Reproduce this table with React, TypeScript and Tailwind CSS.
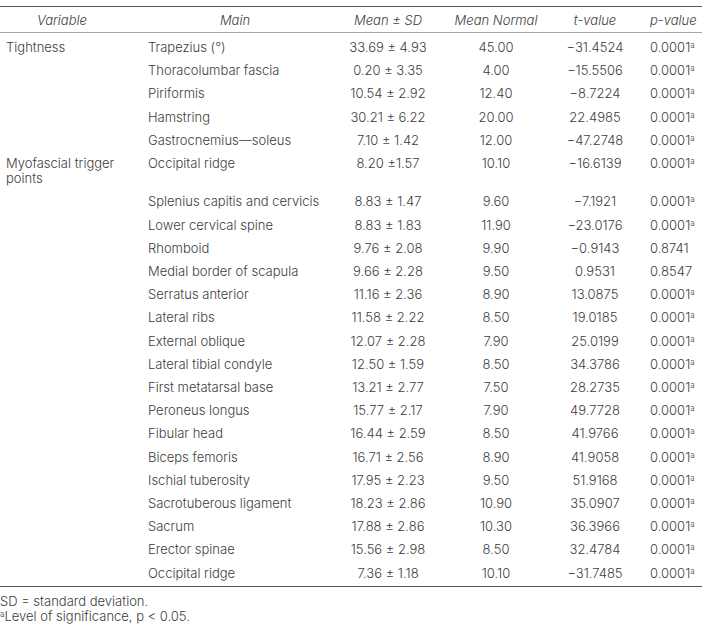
import React from "react";

type Row = { v?: string; m: string; sd: string; n: string; t: string; p: string; sup?: boolean };

const rows: Row[] = [
  { v: "Tightness", m: "Trapezius (°)", sd: "33.69 ± 4.93", n: "45.00", t: "−31.4524", p: "0.0001", sup: true },
  { m: "Thoracolumbar fascia", sd: "0.20 ± 3.35", n: "4.00", t: "−15.5506", p: "0.0001", sup: true },
  { m: "Piriformis", sd: "10.54 ± 2.92", n: "12.40", t: "−8.7224", p: "0.0001", sup: true },
  { m: "Hamstring", sd: "30.21 ± 6.22", n: "20.00", t: "22.4985", p: "0.0001", sup: true },
  { m: "Gastrocnemius—soleus", sd: "7.10 ± 1.42", n: "12.00", t: "−47.2748", p: "0.0001", sup: true },
  { v: "Myofascial trigger points", m: "Occipital ridge", sd: "8.20 ±1.57", n: "10.10", t: "−16.6139", p: "0.0001", sup: true },
  { m: "Splenius capitis and cervicis", sd: "8.83 ± 1.47", n: "9.60", t: "−7.1921", p: "0.0001", sup: true },
  { m: "Lower cervical spine", sd: "8.83 ± 1.83", n: "11.90", t: "−23.0176", p: "0.0001", sup: true },
  { m: "Rhomboid", sd: "9.76 ± 2.08", n: "9.90", t: "−0.9143", p: "0.8741" },
  { m: "Medial border of scapula", sd: "9.66 ± 2.28", n: "9.50", t: "0.9531", p: "0.8547" },
  { m: "Serratus anterior", sd: "11.16 ± 2.36", n: "8.90", t: "13.0875", p: "0.0001", sup: true },
  { m: "Lateral ribs", sd: "11.58 ± 2.22", n: "8.50", t: "19.0185", p: "0.0001", sup: true },
  { m: "External oblique", sd: "12.07 ± 2.28", n: "7.90", t: "25.0199", p: "0.0001", sup: true },
  { m: "Lateral tibial condyle", sd: "12.50 ± 1.59", n: "8.50", t: "34.3786", p: "0.0001", sup: true },
  { m: "First metatarsal base", sd: "13.21 ± 2.77", n: "7.50", t: "28.2735", p: "0.0001", sup: true },
  { m: "Peroneus longus", sd: "15.77 ± 2.17", n: "7.90", t: "49.7728", p: "0.0001", sup: true },
  { m: "Fibular head", sd: "16.44 ± 2.59", n: "8.50", t: "41.9766", p: "0.0001", sup: true },
  { m: "Biceps femoris", sd: "16.71 ± 2.56", n: "8.90", t: "41.9058", p: "0.0001", sup: true },
  { m: "Ischial tuberosity", sd: "17.95 ± 2.23", n: "9.50", t: "51.9168", p: "0.0001", sup: true },
  { m: "Sacrotuberous ligament", sd: "18.23 ± 2.86", n: "10.90", t: "35.0907", p: "0.0001", sup: true },
  { m: "Sacrum", sd: "17.88 ± 2.86", n: "10.30", t: "36.3966", p: "0.0001", sup: true },
  { m: "Erector spinae", sd: "15.56 ± 2.98", n: "8.50", t: "32.4784", p: "0.0001", sup: true },
  { m: "Occipital ridge", sd: "7.36 ± 1.18", n: "10.10", t: "−31.7485", p: "0.0001", sup: true },
];

const grid = "grid grid-cols-[124px_222px_84px_132px_66px_74px]";

export default function App() {
  return (
    <div
      className="w-[708px] h-[624px] bg-white pt-[6px] text-[#3d3d3d] text-[13px] font-light"
      style={{ fontFamily: "Inter, 'Open Sans', sans-serif" }}
    >
      <div className="w-[702px]">
        <div className={`${grid} border-t border-[#555] border-b border-b-[#a8a8a8] h-[27px] pt-[3px] items-center italic`}>
          <div className="text-center">Variable</div>
          <div className="text-center">Main</div>
          <div className="text-center">Mean ± SD</div>
          <div className="text-center">Mean Normal</div>
          <div className="text-center">t-value</div>
          <div className="pl-[22px]">p-value</div>
        </div>
        <div className="border-b border-[#555] pt-[3px] pb-[1px]">
          {rows.map((r, i) => (
            <div key={i} className={`${grid} leading-[15.2px] py-[4px]`}>
              <div className="pl-[6px] pr-[4px]">{r.v ?? ""}</div>
              <div className="pl-[24px] whitespace-nowrap">{r.m}</div>
              <div className="text-center whitespace-nowrap">{r.sd}</div>
              <div className="text-center">{r.n}</div>
              <div className="text-center">{r.t}</div>
              <div className="pl-[22px] whitespace-nowrap">
                {r.p}
                {r.sup ? <span className="text-[8px] align-[4px] leading-none">a</span> : null}
              </div>
            </div>
          ))}
        </div>
        <div className="pt-[7px] leading-[15px]">
          <div>SD = standard deviation.</div>
          <div>
            <span className="text-[8px] align-[4px] leading-none">a</span>Level of significance, p &lt; 0.05.
          </div>
        </div>
      </div>
    </div>
  );
}
